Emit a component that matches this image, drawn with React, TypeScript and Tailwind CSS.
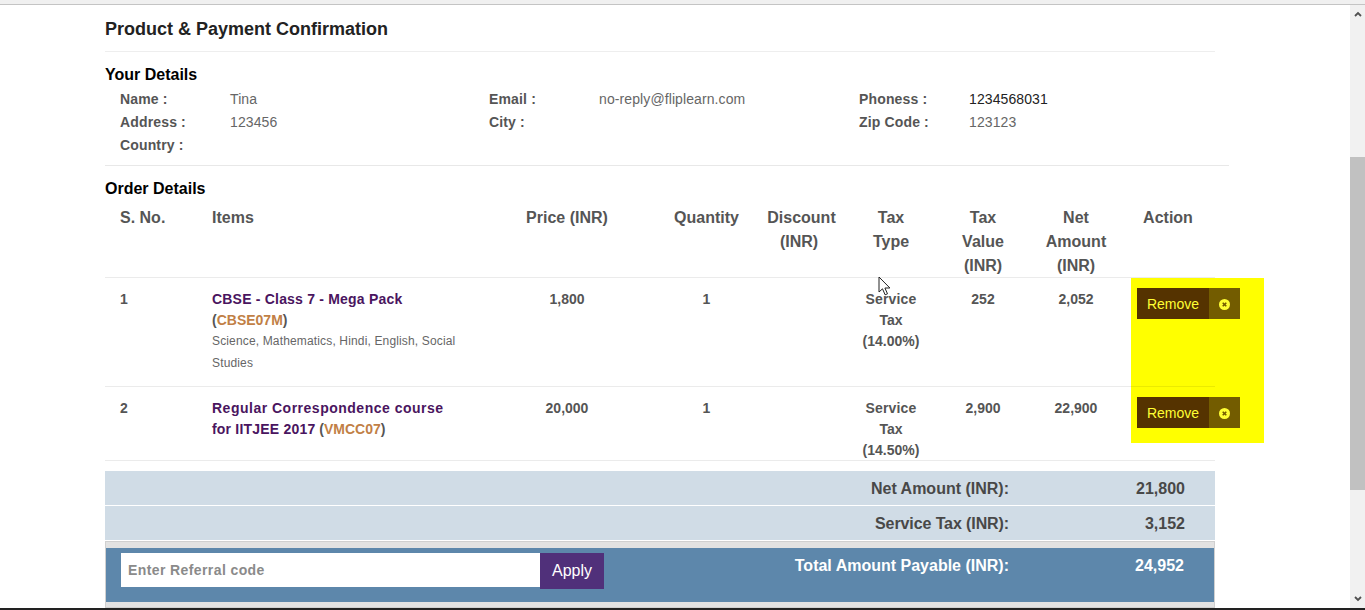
const rowGrid = "grid grid-cols-[92px_283px_174px_105px_85px_94px_90px_96px_91px]";

const details = [
  [["Name :", "Tina"], ["Email :", "no-reply@fliplearn.com"], ["Phoness :", "1234568031"]],
  [["Address :", "123456"], ["City :", ""], ["Zip Code :", "123123"]],
  [["Country :", ""], ["", ""], ["", ""]],
];

const headers = [
  ["Price (INR)"],
  ["Quantity"],
  ["Discount", "(INR)"],
  ["Tax", "Type"],
  ["Tax", "Value", "(INR)"],
  ["Net", "Amount", "(INR)"],
];

const RemoveButton = () => {
  return (
    <button className="ml-[13px] flex h-[31px] w-[103px] items-stretch text-[14px] font-normal text-[#ffff33]">
      <span className="flex w-[72px] items-center justify-center bg-[#553300] pt-[2px]">Remove</span>
      <span className="flex w-[31px] items-center justify-center bg-[#735c00] pt-[2px]">
        <svg width="11" height="11" viewBox="0 0 11 11">
          <circle cx="5.5" cy="5.5" r="5.5" fill="#ffff33" />
          <path d="M3.7 3.7l3.6 3.6M7.3 3.7l-3.6 3.6" stroke="#735c00" strokeWidth="1.6" />
        </svg>
      </span>
    </button>
  );
};

const OrderRow = ({ no, title, code, sub, price, taxRate, taxValue, net, height }: any) => {
  return (
    <div className={`${rowGrid} border-b border-black/[.08] pt-[11px] text-[14px] leading-[21px] font-bold text-[#555555] ${height}`}>
      <div className="pl-[15px]">{no}</div>
      <div className="pl-[15px] pr-[5px]">
        {title}
        {code}
        {sub && <p className="-mt-px text-[12px] leading-[22px] font-normal tracking-[0.15px] text-[#666666]">{sub}</p>}
      </div>
      <div className="text-center">{price}</div>
      <div className="text-center">1</div>
      <div></div>
      <div className="text-center">
        <span className="tracking-[0.2px]">Service</span>
        <br />
        Tax
        <br />
        {taxRate}
      </div>
      <div className="text-center">{taxValue}</div>
      <div className="text-center">{net}</div>
      <div className="-mt-[1px]">
        <RemoveButton />
      </div>
    </div>
  );
};

export default function App() {
  return (
    <div className="relative flex h-[610px] flex-col overflow-hidden bg-white font-['Liberation_Sans',Arial,sans-serif]">
      <div className="h-[5px] shrink-0 border-b border-[#c4c4c4] bg-[#f0f0f0]"></div>

      {/* highlight sitting behind the action cells */}
      <div className="absolute top-[278px] left-[1131px] h-[165px] w-[133px] bg-[#ffff00]"></div>

      <div className="flex min-h-0 flex-1">
        <main className="relative min-w-0 flex-1 pl-[105px]">
          <div className="w-[1110px]">
            <h1 className="flex h-[47px] items-end border-b border-[#eeeeee] pb-[10px] text-[18px] leading-[24px] font-bold text-[#222222]">
              Product &amp; Payment Confirmation
            </h1>
          </div>

          <h2 className="mt-[13px] text-[16px] leading-[20px] font-bold text-black">Your Details</h2>
          <div className="w-[1124px] border-b border-[#e8e8e8] pt-[3px] pb-[8px]">
            {details.map((row, i) => (
              <div key={i} className="grid h-[23px] grid-cols-[369px_370px_1fr] items-center pl-[15px] text-[14px]">
                {row.map((cell, j) => (
                  <div key={j} className="flex">
                    <span className="w-[110px] font-bold tracking-[0.15px] text-[#555555]">{cell[0]}</span>
                    <span className={cell[0] === "Phoness :" ? "tracking-[0.1px] text-[#222222]" : "tracking-[0.1px] text-[#666666]"}>{cell[1]}</span>
                  </div>
                ))}
              </div>
            ))}
          </div>

          <h2 className="mt-[13px] text-[16px] leading-[20px] font-bold text-black">Order Details</h2>

          <div className="w-[1110px]">
            <div className={`${rowGrid} h-[79px] border-b border-black/[.08] pt-[7px] text-[16px] leading-[24px] font-bold text-[#555555]`}>
              <div className="pl-[15px]">S. No.</div>
              <div className="pl-[15px]">Items</div>
              {headers.map((lines) => (
                <div key={lines.join()} className="text-center">
                  {lines.map((line, i) => (
                    <div key={i} className={line === "(INR)" && lines[0] === "Discount" ? "pr-[5px]" : ""}>
                      {line}
                    </div>
                  ))}
                </div>
              ))}
              <div className="pr-[3px] text-center">Action</div>
            </div>
            <OrderRow
              no="1"
              title={<span className="tracking-[0.2px] text-[#4a1560]">CBSE - Class 7 - Mega Pack</span>}
              code={
                <>
                  {" "}
                  (<span className="text-[#c17f46]">CBSE07M</span>)
                </>
              }
              sub="Science, Mathematics, Hindi, English, Social Studies"
              price="1,800"
              taxRate="(14.00%)"
              taxValue="252"
              net="2,052"
              height="h-[109px]"
            />
            <OrderRow
              no="2"
              title={
                <span className="tracking-[0.2px] text-[#4a1560]">
                  <span className="tracking-[0.5px]">Regular Correspondence course</span>
                  <br />
                  for IITJEE 2017
                </span>
              }
              code={
                <>
                  {" "}
                  (<span className="text-[#c17f46]">VMCC07</span>)
                </>
              }
              price="20,000"
              taxRate="(14.50%)"
              taxValue="2,900"
              net="22,900"
              height="h-[74px]"
            />

            <div className="mt-[10px] flex h-[34px] items-center justify-end bg-[#d0dce6] pt-px text-[16px] font-bold text-[#484848]">
              <span>Net Amount (INR):</span>
              <span className="w-[206px] pr-[30px] text-right">21,800</span>
            </div>
            <div className="mt-px flex h-[34px] items-center justify-end bg-[#d0dce6] pt-px text-[16px] font-bold text-[#484848]">
              <span className="tracking-[-0.1px]">Service Tax (INR):</span>
              <span className="w-[206px] pr-[30px] text-right">3,152</span>
            </div>
            <div className="mt-px h-[67px] border border-[#d0d0d0] bg-[#e2e2e2] py-[6px]">
              <div className="flex h-[54px] justify-between bg-[#5d87ab] pl-[15px]">
                <div className="flex h-[36px] pt-[5px]">
                  <input
                    placeholder="Enter Referral code"
                    className="h-[34px] w-[419px] bg-white px-[7px] text-[14px] font-bold tracking-[0.4px] placeholder:text-[#8a8a8a]"
                  />
                  <button className="h-[36px] w-[64px] bg-[#50307a] text-[16px] text-white">Apply</button>
                </div>
                <div className="flex pt-[8px] text-[16px] leading-[20px] font-bold text-white">
                  <span>Total Amount Payable (INR):</span>
                  <span className="w-[205px] pr-[30px] text-right">24,952</span>
                </div>
              </div>
            </div>
          </div>
        </main>

        <div className="relative flex w-[15px] shrink-0 flex-col bg-[#f1f1f1]">
          <div className="flex h-[16px] items-center justify-center pt-[2px]">
            <svg width="8" height="6" viewBox="0 0 8 6">
              <path d="M1 5l3-3 3 3" fill="none" stroke="#505050" strokeWidth="1.8" />
            </svg>
          </div>
          <div className="mt-[136px] h-[333px] bg-[#c1c1c1]"></div>
          <div className="mt-auto flex h-[16px] items-center justify-center pb-[2px]">
            <svg width="8" height="6" viewBox="0 0 8 6">
              <path d="M1 1l3 3 3-3" fill="none" stroke="#505050" strokeWidth="1.8" />
            </svg>
          </div>
        </div>
      </div>
      <div className="h-[2px] shrink-0 bg-[#222222]"></div>

      {/* mouse pointer */}
      <svg className="absolute top-[276px] left-[878px] z-20" width="13" height="20" viewBox="0 0 13 20">
        <path d="M1 1v15l3.5-3.2 2.6 6 2.4-1-2.6-5.8h5z" fill="white" stroke="#222222" strokeWidth="1" />
      </svg>
    </div>
  );
}
